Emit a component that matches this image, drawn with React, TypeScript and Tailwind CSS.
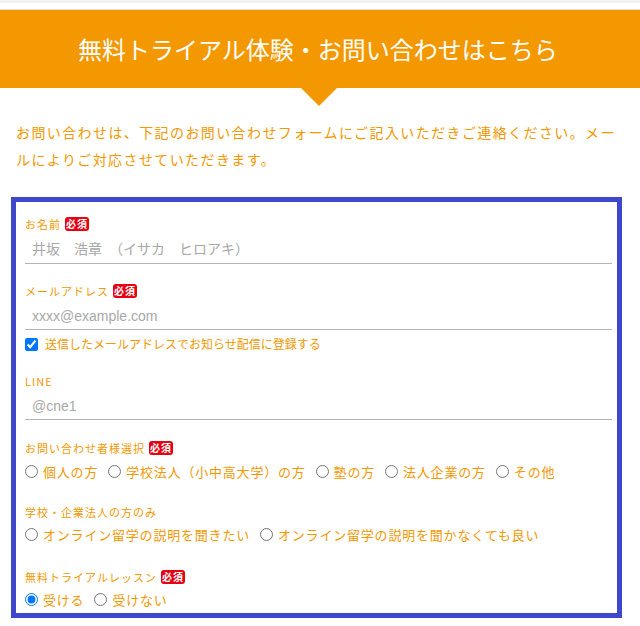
import React from "react";

const Badge = () => (
  <span className="ml-[4px] inline-flex h-[14px] w-[24px] items-center justify-center rounded-[3px] bg-[#e60012] text-[10px] font-bold leading-none text-white">
    必須
  </span>
);

const Label = ({ text, req }: { text: string; req?: boolean }) => (
  <div className="flex h-[14px] items-center text-[11px] leading-none tracking-[1px] text-[#f39800]">
    <span>{text}</span>
    {req && <Badge />}
  </div>
);

const TextInput = ({ ph, h }: { ph: string; h: string }) => (
  <input
    readOnly
    placeholder={ph}
    className={`block w-full ${h} border-b border-[#b4b4b4] pt-[4px] pl-[7px] font-['Liberation_Sans','Noto_Sans_CJK_JP',sans-serif] text-[14px] text-[#333] outline-none placeholder:text-[#a8a8a8]`}
  />
);

const Radio = ({ name, label, checked }: { name: string; label: string; checked?: boolean }) => (
  <label className="flex items-center gap-[5px]">
    <input type="radio" name={name} defaultChecked={checked} className="m-0 h-[13px] w-[13px]" />
    <span className="text-[13px] leading-none tracking-[0.8px] text-[#f39800]">{label}</span>
  </label>
);

export default function App() {
  return (
    <div className="relative min-h-[626px] w-[640px] bg-white font-['Noto_Sans_CJK_JP',sans-serif]">
      <div className="h-[3px] bg-[#f2f2f2]" />
      <div className="h-[6px] bg-white" />
      <div className="h-[1px] bg-[#dcdcdc]" />
      <div className="flex h-[78px] items-center justify-center bg-[#f39800] pb-[1px] pr-[4px] text-[24px] text-white">
        無料トライアル体験・お問い合わせはこちら
      </div>
      <svg className="absolute left-[301px] top-[88px]" width="36" height="18" viewBox="0 0 36 18">
        <polygon points="0,0 36,0 18,18" fill="#f39800" />
      </svg>

      <p className="mt-[31px] px-[16px] text-[14px] leading-[27px] tracking-[0.1em] text-[#f39800]">
        お問い合わせは、下記のお問い合わせフォームにご記入いただきご連絡ください。メールによりご対応させていただきます。
      </p>

      <div className="ml-[11px] mt-[24px] w-[611px] border-[5px] border-[#3f48cc] pb-[6px] pl-[9px] pr-[5px] pt-[15px]">
        <Label text="お名前" req />
        <TextInput ph="井坂　浩章　（イサカ　ヒロアキ）" h="h-[33px]" />

        <div className="mt-[20px]">
          <Label text="メールアドレス" req />
        </div>
        <TextInput ph="xxxx@example.com" h="h-[32px]" />

        <label className="mt-[7px] flex h-[14px] items-center">
          <input type="checkbox" defaultChecked className="m-0 mr-[7px] h-[13px] w-[13px]" />
          <span className="text-[12px] leading-none text-[#f39800]">送信したメールアドレスでお知らせ配信に登録する</span>
        </label>

        <div className="mt-[23px]">
          <Label text="LINE" />
        </div>
        <TextInput ph="@cne1" h="h-[32px]" />

        <div className="mt-[21px]">
          <Label text="お問い合わせ者様選択" req />
        </div>
        <div className="mt-[8px] flex h-[16px] items-center gap-x-[10px]">
          <Radio name="type" label="個人の方" />
          <Radio name="type" label="学校法人（小中高大学）の方" />
          <Radio name="type" label="塾の方" />
          <Radio name="type" label="法人企業の方" />
          <Radio name="type" label="その他" />
        </div>

        <div className="mt-[26px]">
          <Label text="学校・企業法人の方のみ" />
        </div>
        <div className="mt-[7px] flex h-[16px] items-center gap-x-[10px]">
          <Radio name="exp" label="オンライン留学の説明を聞きたい" />
          <Radio name="exp" label="オンライン留学の説明を聞かなくても良い" />
        </div>

        <div className="mt-[28px]">
          <Label text="無料トライアルレッスン" req />
        </div>
        <div className="mt-[7px] flex h-[16px] items-center gap-x-[10px]">
          <Radio name="trial" label="受ける" checked />
          <Radio name="trial" label="受けない" />
        </div>
      </div>
    </div>
  );
}
